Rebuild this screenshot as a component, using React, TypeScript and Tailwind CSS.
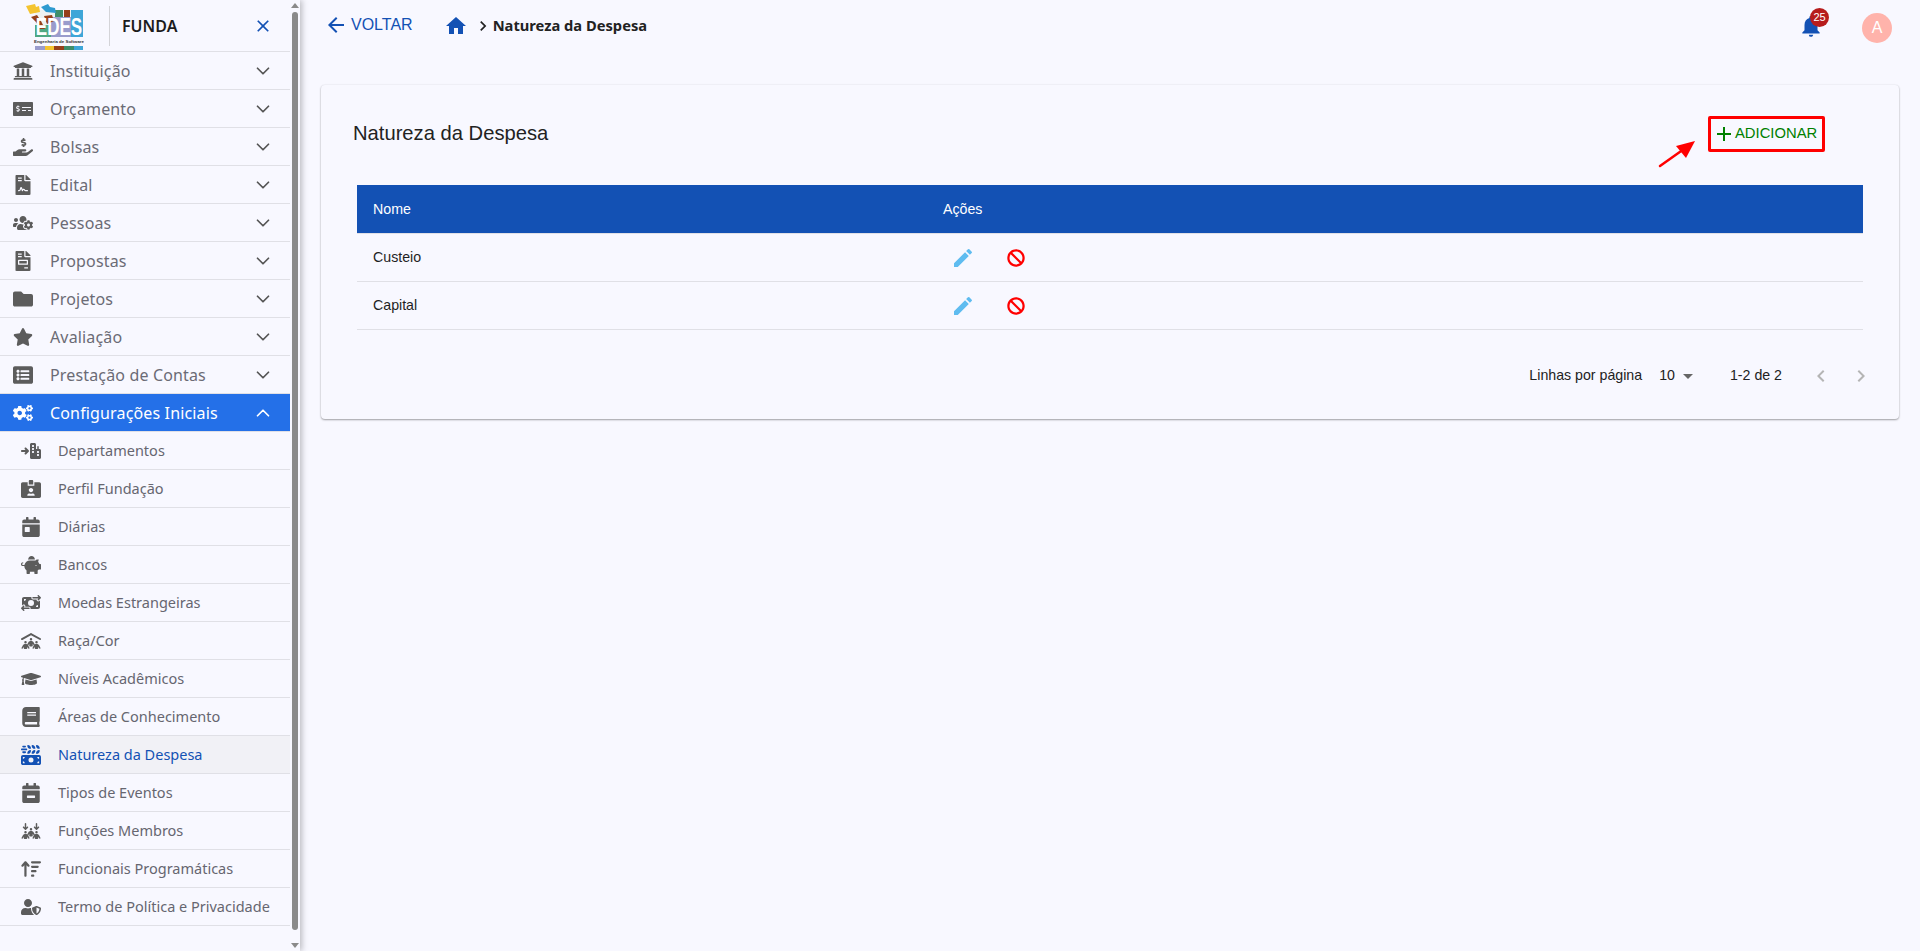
import React from "react";
import {
  FaUniversity, FaMoneyCheckAlt, FaHandHoldingUsd, FaFileContract, FaUsersCog, FaFileInvoice, FaFolder, FaStar, FaListAlt, FaCogs,
  FaIdCardAlt, FaCalendarDay, FaPiggyBank, FaGraduationCap, FaBook, FaCalendarMinus, FaUserShield, FaBan,
} from "react-icons/fa";
import { FaArrowRightToCity, FaMoneyBillTransfer, FaPeopleRoof, FaMoneyBillWheat, FaArrowsDownToPeople, FaArrowUpWideShort } from "react-icons/fa6";
import { MdArrowBack, MdEdit, MdHome, MdNotifications, MdClose, MdAdd, MdChevronLeft, MdChevronRight, MdArrowDropDown } from "react-icons/md";
import { ChevronDown, ChevronUp } from "lucide-react";

const mains = [
  ["Instituição", FaUniversity],
  ["Orçamento", FaMoneyCheckAlt],
  ["Bolsas", FaHandHoldingUsd],
  ["Edital", FaFileContract],
  ["Pessoas", FaUsersCog],
  ["Propostas", FaFileInvoice],
  ["Projetos", FaFolder],
  ["Avaliação", FaStar],
  ["Prestação de Contas", FaListAlt],
] as const;

const subs = [
  ["Departamentos", FaArrowRightToCity],
  ["Perfil Fundação", FaIdCardAlt],
  ["Diárias", FaCalendarDay],
  ["Bancos", FaPiggyBank],
  ["Moedas Estrangeiras", FaMoneyBillTransfer],
  ["Raça/Cor", FaPeopleRoof],
  ["Níveis Acadêmicos", FaGraduationCap],
  ["Áreas de Conhecimento", FaBook],
  ["Natureza da Despesa", FaMoneyBillWheat],
  ["Tipos de Eventos", FaCalendarMinus],
  ["Funções Membros", FaArrowsDownToPeople],
  ["Funcionais Programáticas", FaArrowUpWideShort],
  ["Termo de Política e Privacidade", FaUserShield],
] as const;

function Logo() {
  return (
    <svg width="58" height="49" viewBox="0 0 58 49" className="shrink-0">
      <rect x="9" y="9" width="48" height="27" fill="#eef2f2" />
      <rect x="29" y="9" width="8" height="7" fill="#3e8e6a" />
      <rect x="38" y="9" width="6" height="7" fill="#96401a" />
      <rect x="45" y="9" width="12" height="27" fill="#3ea6d8" />
      <rect x="9" y="24" width="16" height="12" fill="#4fa884" />
      <rect x="25" y="16" width="20" height="20" fill="#9a9ccc" />
      <path d="M0 5 L9 3 L10 6 L13 5 L14 11 L4 13 Z" fill="#f4c430" />
      <path d="M15 6 L22 3 L24 6 L29 7 L30 12 L20 11 Z" fill="#2e9ad0" />
      <path d="M5 16 L11 14 L15 20 L19 28 L14 28 L10 21 Z" fill="#96401a" />
      <path d="M18 15 L26 14 L28 20 L21 23 Z" fill="#96401a" />
      <text transform="translate(33 34) scale(1 1.4)" textAnchor="middle" fontFamily="'Liberation Sans', sans-serif" fontWeight="700" fontSize="17" fill="#ffffff">EDES</text>
      <text x="33" y="42" textAnchor="middle" fontFamily="'Liberation Sans', sans-serif" fontWeight="700" fontSize="4.4" fill="#333333">Engenharia de Software</text>
      <rect x="9" y="45" width="10" height="4" fill="#9a9ccc" />
      <rect x="19" y="45" width="9" height="4" fill="#f4c430" />
      <rect x="28" y="45" width="10" height="4" fill="#96401a" />
      <rect x="38" y="45" width="10" height="4" fill="#3e8e6a" />
      <rect x="48" y="45" width="9" height="4" fill="#3ea6d8" />
    </svg>
  );
}

function Sidebar() {
  return (
    <aside className="z-10 flex h-full w-[300px] shrink-0 bg-[#f8f8ff] shadow-[2px_0_6px_rgba(0,0,0,0.25)] font-['Noto_Sans',sans-serif]">
      <div className="w-[290px] shrink-0">
        <div className="flex h-[52px] items-center border-b border-[#e0e0e6] pl-[26px] pr-[17px]">
          <Logo />
          <div className="ml-[25px] h-10 w-px bg-[#d4d4d8]" />
          <span className="ml-[12px] text-[16px] font-semibold text-[#1c1c1c]">FUNDA</span>
          <MdClose className="ml-auto text-[#1351b4]" size={20} />
        </div>
        {mains.map(([label, Icon]) => (
          <div key={label} className="flex h-[38px] items-center border-b border-[#e0e0e6] pl-[13px] pr-[16px] text-[#6b6b75]">
            <span className="flex w-5 justify-center text-[#5c5c5c]"><Icon size={20} /></span>
            <span className="ml-[17px] text-[16px] tracking-[0.15px]">{label}</span>
            <ChevronDown className="ml-auto text-[#555]" size={22} strokeWidth={1.9} />
          </div>
        ))}
        <div className="flex h-[38px] items-center border-b border-[#e0e0e6] bg-[#2470e8] pl-[13px] pr-[16px] text-white">
          <span className="flex w-5 justify-center"><FaCogs size={20} /></span>
          <span className="ml-[17px] text-[16px] tracking-[0.15px]">Configurações Iniciais</span>
          <ChevronUp className="ml-auto" size={22} strokeWidth={1.9} />
        </div>
        {subs.map(([label, Icon]) => {
          const active = label === "Natureza da Despesa";
          return (
            <div key={label} className={`flex h-[38px] items-center border-b border-[#e0e0e6] pl-[21px] ${active ? "bg-[#f1f1f6] text-[#1351b4]" : "text-[#666670]"}`}>
              <span className={`flex w-5 justify-center ${active ? "" : "text-[#5c5c5c]"}`}><Icon size={20} /></span>
              <span className="ml-[17px] text-[14.5px]">{label}</span>
            </div>
          );
        })}
      </div>
      <div className="flex w-[10px] shrink-0 flex-col items-center pt-[3px] pb-[3px]">
        <div className="h-0 w-0 border-x-[4px] border-b-[5px] border-x-transparent border-b-[#8a8a8a]" />
        <div className="mt-[4px] h-[918px] w-[6px] rounded-[3px] bg-[#8a8a8a]" />
        <div className="mt-auto h-0 w-0 border-x-[4px] border-t-[5px] border-x-transparent border-t-[#8a8a8a]" />
      </div>
    </aside>
  );
}

function Row({ name }: { name: string }) {
  return (
    <div className="flex h-[48px] items-center border-b border-[#e0e0e6] pl-4 text-[14.2px] text-[#1f1f1f]">
      <span className="mt-[1px] w-[570px]">{name}</span>
      <MdEdit className="ml-[8px] text-[#5fbcf0]" size={24} />
      <FaBan className="ml-[32px] text-[#ff0000]" size={18} />
    </div>
  );
}

export default function App() {
  return (
    <div className="flex h-[951px] w-full overflow-hidden bg-[#f8f8ff] font-['Liberation_Sans',Arial,sans-serif]">
      <Sidebar />
      <main className="min-w-0 flex-1 px-[21px]">
        <header className="flex h-[85px] items-start pt-[13px]">
          <div className="ml-[3px] flex h-6 items-center text-[#1351b4]">
            <MdArrowBack size={24} className="w-6 shrink-0" />
            <span className="ml-[3px] text-[16px]">VOLTAR</span>
          </div>
          <MdHome className="ml-[31px] mt-[1px] text-[#1351b4]" size={24} />
          <MdChevronRight className="ml-[5px] mt-[3px] text-[#222]" size={20} />
          <span className="font-['Noto_Sans',sans-serif] text-[14.7px] leading-6 font-bold text-[#222]">Natureza da Despesa</span>
          <div className="relative ml-auto mr-[38px]">
            <MdNotifications className="text-[#1351b4]" size={26} />
            <span className="absolute -right-[5px] -top-[5px] flex h-[19px] w-[19px] items-center justify-center rounded-full bg-[#b71c1c] text-[11px] text-white">25</span>
          </div>
          <div className="mr-[7px] flex h-[30px] w-[30px] items-center justify-center rounded-full bg-[#ffb3ab] text-[16px] text-white">A</div>
        </header>
        <section className="h-[334px] rounded-[4px] bg-[#f8f8ff] px-[36px] shadow-[0_1px_2px_rgba(0,0,0,0.35),0_0_2px_rgba(0,0,0,0.08)]">
          <div className="relative flex h-[100px] items-start justify-between">
            <h1 className="-ml-[4px] mt-[36px] text-[20.2px] leading-6 text-[#222]">Natureza da Despesa</h1>
            <div className="relative mr-[38px] mt-[31px]">
              <svg width="40" height="30" viewBox="0 0 40 30" className="absolute -left-[50px] top-[22px]">
                <path d="M2 28 L26 11" stroke="#ff0000" strokeWidth="2.5" strokeLinecap="round" />
                <path d="M37 3 L18 8 L28 20 Z" fill="#ff0000" />
              </svg>
              <div className="flex h-[36px] w-[117px] items-center rounded-[2px] border-[3px] border-[#ff0000] pb-[1px] pl-[1px] text-[14.8px] text-[#008000]">
                <MdAdd size={24} className="shrink-0" />
                <span className="-ml-[1px]">ADICIONAR</span>
              </div>
            </div>
          </div>
          <div className="flex h-[49px] items-center border-b border-[#e0e0e6] bg-[#1351b4] pl-4 pt-[2px] text-[14.2px] text-white">
            <span className="w-[570px]">Nome</span>
            <span>Ações</span>
          </div>
          <Row name="Custeio" />
          <Row name="Capital" />
          <div className="flex h-[89px] items-center pt-[2px] text-[14.2px] text-[#222]">
            <span className="ml-auto">Linhas por página</span>
            <span className="ml-[17px]">10</span>
            <MdArrowDropDown className="ml-[1px] text-[#666]" size={24} />
            <span className="ml-[30px]">1-2 de 2</span>
            <MdChevronLeft className="ml-[27px] text-[#b5b5b5]" size={24} />
            <MdChevronRight className="ml-[16px] -mr-[10px] text-[#b5b5b5]" size={24} />
          </div>
        </section>
      </main>
    </div>
  );
}
